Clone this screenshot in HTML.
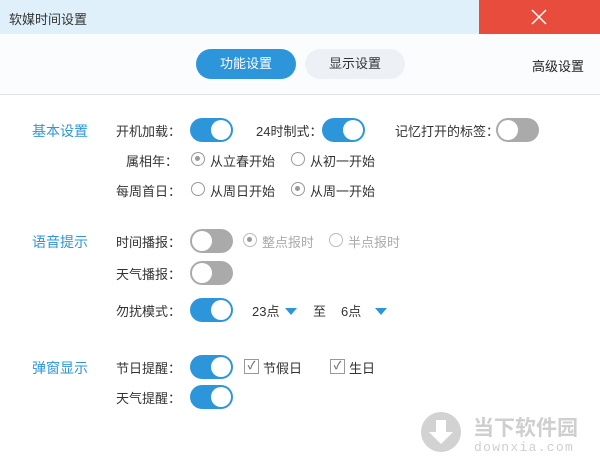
<!DOCTYPE html>
<html><head><meta charset="utf-8"><style>
*{margin:0;padding:0;box-sizing:border-box}
body{width:600px;height:470px;background:#fff;font-family:"Liberation Sans","Noto Sans CJK SC",sans-serif;font-size:13px;color:#333;position:relative;overflow:hidden}
.abs{position:absolute;white-space:nowrap}
.title{left:0;top:0;width:600px;height:34px;background:#dff0fa}
.close{left:479px;top:0;width:121px;height:34px;background:#e84c3d}
.tabs{left:0;top:34px;width:600px;height:61px;background:#fbfcfd;border-bottom:1px solid #e2e4e6}
.tab{height:30px;width:100px;border-radius:15px;text-align:center;line-height:30px;font-size:13px}
.sec{color:#2d96db;font-size:14px}
.lbl{width:62px;text-align:right;left:116px}
.tg{width:43px;height:24px;border-radius:12px;background:#2d96db}
.tg::after{content:"";position:absolute;top:2px;right:2px;width:20px;height:20px;border-radius:50%;background:#fff}
.tg.off{background:#aaa}
.tg.off::after{left:2px;right:auto}
.rd{width:14px;height:14px;border:1.5px solid #999;border-radius:50%;background:#fff}
.rd.on::after{content:"";position:absolute;left:3px;top:3px;width:5px;height:5px;border-radius:50%;background:#999}
.cb{width:15px;height:15px;border:1.5px solid #999;background:#fff;font-size:11px;line-height:12px;text-align:center;color:#777;font-weight:bold}
.tri{width:0;height:0;border-left:6px solid transparent;border-right:6px solid transparent;border-top:7px solid #2d96db}
</style></head><body>
<div class="abs title"></div>
<div class="abs" style="left:9px;top:9px;font-size:13px;color:#333">软媒时间设置</div>
<div class="abs close"><svg width="121" height="34"><path d="M53 10L67 24M67 10L53 24" stroke="#fff" stroke-width="1.5"/></svg></div>
<div class="abs tabs"></div>
<div class="abs tab" style="left:196px;top:49px;background:#2d96db;color:#fff">功能设置</div>
<div class="abs tab" style="left:305px;top:49px;background:#edf1f5;color:#333">显示设置</div>
<div class="abs" style="left:532px;top:56px;color:#222">高级设置</div>

<div class="abs sec" style="left:32px;top:121px">基本设置</div>
<div class="abs lbl" style="top:121px">开机加载：</div>
<div class="abs tg" style="left:190px;top:118px"></div>
<div class="abs" style="left:256px;top:121px">24时制式：</div>
<div class="abs tg" style="left:322px;top:118px"></div>
<div class="abs" style="left:395px;top:121px">记忆打开的标签：</div>
<div class="abs tg off" style="left:496px;top:118px"></div>

<div class="abs lbl" style="top:151px">属相年：</div>
<div class="abs rd on" style="left:191px;top:152px"></div>
<div class="abs" style="left:210px;top:151px">从立春开始</div>
<div class="abs rd" style="left:291px;top:152px"></div>
<div class="abs" style="left:310px;top:151px">从初一开始</div>

<div class="abs lbl" style="top:181px">每周首日：</div>
<div class="abs rd" style="left:191px;top:182px"></div>
<div class="abs" style="left:210px;top:181px">从周日开始</div>
<div class="abs rd on" style="left:291px;top:182px"></div>
<div class="abs" style="left:310px;top:181px">从周一开始</div>

<div class="abs sec" style="left:32px;top:232px">语音提示</div>
<div class="abs lbl" style="top:232px">时间播报：</div>
<div class="abs tg off" style="left:190px;top:229px"></div>
<div class="abs rd on" style="left:243px;top:233px;border-color:#bbb"></div>
<div class="abs" style="left:262px;top:232px;color:#aaa">整点报时</div>
<div class="abs rd" style="left:329px;top:233px;border-color:#bbb"></div>
<div class="abs" style="left:348px;top:232px;color:#aaa">半点报时</div>

<div class="abs lbl" style="top:264px">天气播报：</div>
<div class="abs tg off" style="left:190px;top:261px"></div>

<div class="abs lbl" style="top:301px">勿扰模式：</div>
<div class="abs tg" style="left:190px;top:298px"></div>
<div class="abs" style="left:252px;top:301px">23点</div>
<div class="abs tri" style="left:285px;top:308px"></div>
<div class="abs" style="left:313px;top:301px">至</div>
<div class="abs" style="left:341px;top:301px">6点</div>
<div class="abs tri" style="left:375px;top:308px"></div>

<div class="abs sec" style="left:32px;top:358px">弹窗显示</div>
<div class="abs lbl" style="top:358px">节日提醒：</div>
<div class="abs tg" style="left:190px;top:355px"></div>
<div class="abs cb" style="left:244px;top:359px">✓</div>
<div class="abs" style="left:263px;top:358px">节假日</div>
<div class="abs cb" style="left:330px;top:359px">✓</div>
<div class="abs" style="left:349px;top:358px">生日</div>

<div class="abs lbl" style="top:388px">天气提醒：</div>
<div class="abs tg" style="left:190px;top:385px"></div>

<svg class="abs" style="left:420px;top:411px" width="42" height="42"><circle cx="21" cy="21" r="20" fill="#d2d2d2"/><path d="M16 9h10v12h7L21 33 9 21h7z" fill="#fff"/></svg>
<div class="abs" style="left:473px;top:412px;font-size:21px;font-weight:bold;color:#cfcfcf">当下软件园</div>
<div class="abs" style="left:474px;top:440px;font-size:13px;font-family:'Liberation Mono',monospace;color:#cfcfcf;letter-spacing:1.3px">downxia.com</div>
</body></html>
